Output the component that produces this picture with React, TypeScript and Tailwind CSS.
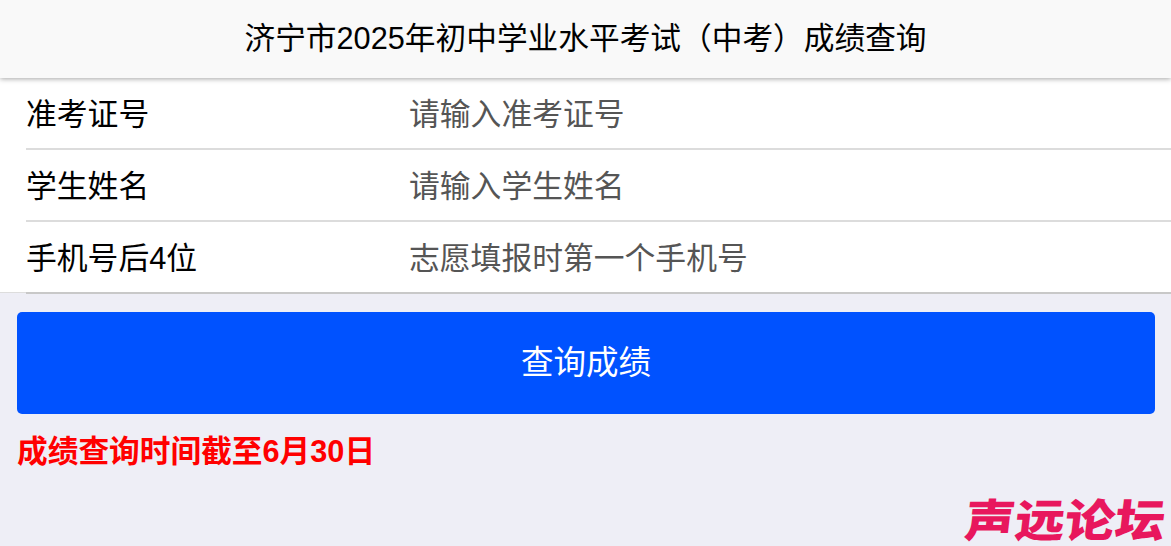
const FONT = "font-['Liberation_Sans','Noto_Sans_CJK_SC',sans-serif]";

const FIELDS = [
  { label: "准考证号", placeholder: "请输入准考证号" },
  { label: "学生姓名", placeholder: "请输入学生姓名" },
  { label: "手机号后4位", placeholder: "志愿填报时第一个手机号" },
];

function Field({ label, placeholder }: { label: string; placeholder: string }) {
  return (
    <div className="ml-[26px] flex h-[72px] items-center border-b-2 border-[#dcdcdc] pt-1 last:border-[#c8c8c8]">
      <label className="w-[383px] shrink-0 text-[30.8px] text-black">{label}</label>
      <input
        type="text"
        placeholder={placeholder}
        className="min-w-0 flex-1 bg-transparent text-[30.8px] outline-none placeholder:text-[#555555]"
      />
    </div>
  );
}

export default function App() {
  return (
    <div className={`${FONT} flex h-[546px] flex-col overflow-hidden bg-[#eeeef6]`}>
      <header className="relative z-10 flex h-[78px] shrink-0 items-center justify-center bg-[#f9f9f9] text-[30.7px] text-black shadow-[0_1px_5px_rgba(0,0,0,0.35)]">
        济宁市2025年初中学业水平考试（中考）成绩查询
      </header>

      <div className="h-[215px] shrink-0 border-b border-[#dddddd] bg-white">
        {FIELDS.map((f) => (
          <Field key={f.label} label={f.label} placeholder={f.placeholder} />
        ))}
      </div>

      <div className="px-[17px] pr-[16px] pt-[19px]">
        <button
          type="button"
          className="flex h-[102px] w-full items-center justify-center rounded-[5px] bg-[#0052ff] pt-px text-[32.5px] text-white"
        >
          查询成绩
        </button>
        <p className="mt-[19px] text-[30.7px] leading-[38px] font-bold text-[#ff0000]">成绩查询时间截至6月30日</p>
      </div>

      <div className="mt-auto flex justify-end pr-[6px]">
        <span className="-skew-x-6 scale-y-90 text-[50px] leading-[48px] font-black tracking-[0px] text-[#e8175d]">
          声远论坛
        </span>
      </div>
    </div>
  );
}
